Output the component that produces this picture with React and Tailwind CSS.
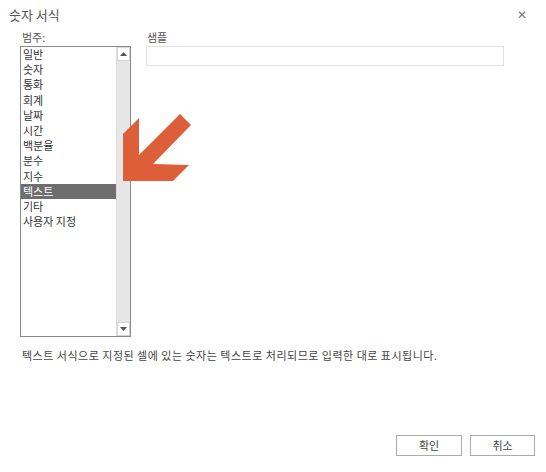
import React from "react";

const items = ["일반", "숫자", "통화", "회계", "날짜", "시간", "백분율", "분수", "지수", "텍스트", "기타", "사용자 지정"];
const font = { fontFamily: '"Noto Sans CJK KR", "Noto Sans", sans-serif' };

export default function App() {
  return (
    <div className="relative w-[546px] h-[472px] bg-white text-[#444]" style={font}>
      <div className="flex justify-between items-start pl-[9px] pr-[19px] pt-[5px] h-[30px]">
        <div className="text-[13px] leading-[20px] text-[#555]">숫자 서식</div>
        <div className="text-[12px] leading-[16px] mt-[1px] text-[#777]">✕</div>
      </div>
      <div className="flex">
        <div className="ml-[20px] w-[111px]">
          <div className="text-[11px] leading-[14px] pl-[2px] h-[16px] text-[#555]">범주:</div>
          <div className="flex h-[291px] border border-[#8a8a8a] bg-white">
            <div className="flex-1 flex flex-col">
              {items.map((it, i) => (
                <div
                  key={it}
                  className={
                    "h-[15.2px] leading-[15.2px] text-[11px] pl-[2px] " +
                    (i === 9 ? "bg-[#6e6e6e] text-white" : "text-[#333]")
                  }
                >
                  {it}
                </div>
              ))}
            </div>
            <div className="w-[14px] bg-[#e6e6e6] flex flex-col justify-between border-l border-[#dcdcdc]">
              <div className="h-[14px] bg-white border border-[#d6d6d6] flex items-center justify-center">
                <svg width="7" height="4" viewBox="0 0 7 4"><path d="M0 4 L3.5 0 L7 4 Z" fill="#555" /></svg>
              </div>
              <div className="h-[14px] bg-white border border-[#d6d6d6] flex items-center justify-center">
                <svg width="7" height="4" viewBox="0 0 7 4"><path d="M0 0 L3.5 4 L7 0 Z" fill="#555" /></svg>
              </div>
            </div>
          </div>
        </div>
        <div className="ml-[15px] w-[358px]">
          <div className="text-[11px] leading-[14px] pl-[1px] h-[16px] text-[#555]">샘플</div>
          <div className="h-[20px] border border-[#e3e3e3] bg-white" />
        </div>
      </div>
      <div className="pl-[22px] pt-[11px] text-[11px] leading-[14px] tracking-[0.5px] text-[#444]">
        텍스트 서식으로 지정된 셀에 있는 숫자는 텍스트로 처리되므로 입력한 대로 표시됩니다.
      </div>
      <div className="flex justify-end gap-[8px] pr-[11px] pt-[73px]">
        <div className="w-[66px] h-[21px] border border-[#ababab] bg-white flex items-center justify-center text-[11px] text-[#444]">확인</div>
        <div className="w-[65px] h-[21px] border border-[#ababab] bg-white flex items-center justify-center text-[11px] text-[#444]">취소</div>
      </div>
      <svg className="absolute left-0 top-0 pointer-events-none" width="546" height="472">
        <polygon
          points="123,181 123,134 139,118 139,155 180,114 191,125 153,164 189,165 173,181"
          fill="#dc5f3a"
        />
      </svg>
    </div>
  );
}
